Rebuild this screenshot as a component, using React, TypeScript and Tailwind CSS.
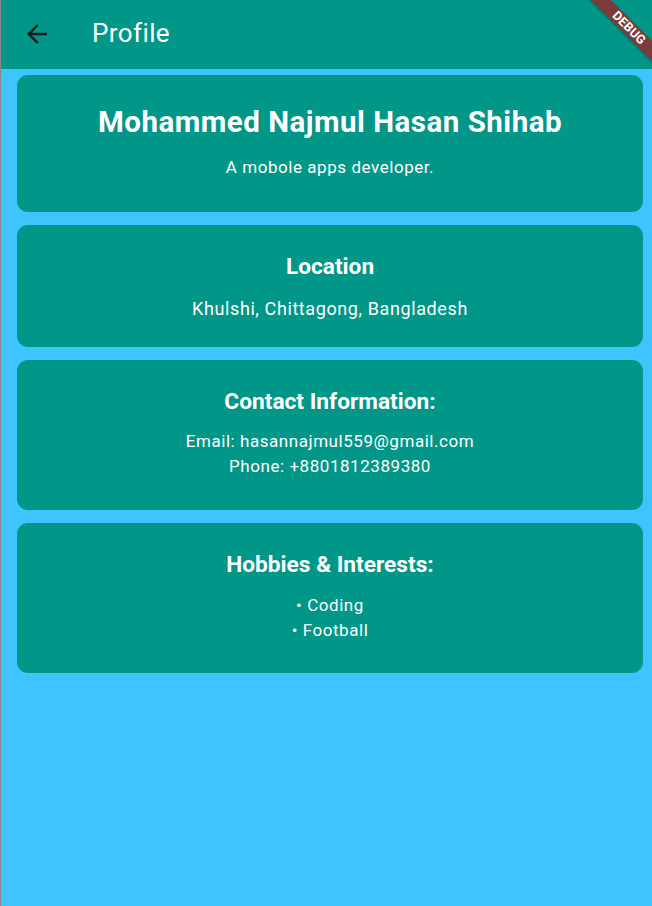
import { MdArrowBack } from "react-icons/md";

const font = { fontFamily: "Roboto, 'Noto Sans', sans-serif" };

export default function App() {
  return (
    <div
      className="relative min-h-[906px] overflow-hidden border-l border-[#8a8a8a] bg-[#40c4ff] text-white"
      style={font}
    >
      <header className="relative flex h-[69px] items-center overflow-hidden bg-[#009688]">
        <MdArrowBack className="ml-[21px] -translate-y-px text-[#1d1b20]" size={30} />
        <h1 className="ml-[40px] -translate-y-[2px] text-[26px] leading-none tracking-[0.4px]">Profile</h1>
        <div className="absolute top-[21px] left-[557px] flex h-[14px] w-[142px] rotate-45 items-center justify-center bg-[#7a3b39] shadow-[0_1px_3px_rgba(0,0,0,0.3)]">
          <span className="text-[12.5px] leading-none font-bold tracking-[0.2px]">DEBUG</span>
        </div>
      </header>

      <main className="mr-[9px] ml-[16px] flex flex-col gap-[13px] pt-[6px]">
        <section className="rounded-[11px] bg-[#009688] pt-[31px] pb-[32px] text-center">
          <h2 className="text-[29.5px] leading-[32px] font-bold tracking-[0.5px]">
            Mohammed Najmul Hasan Shihab
          </h2>
          <p className="mt-[17px] text-[17px] leading-[25px] tracking-[0.55px]">A mobole apps developer.</p>
        </section>

        <section className="rounded-[11px] bg-[#009688] pt-[30px] pb-[26px] text-center">
          <h3 className="text-[22.7px] leading-[24px] font-bold">Location</h3>
          <p className="mt-[17px] text-[18px] leading-[25px] tracking-[0.6px]">
            Khulshi, Chittagong, Bangladesh
          </p>
        </section>

        <section className="rounded-[11px] bg-[#009688] pt-[30px] pb-[31px] text-center">
          <h3 className="text-[22.7px] leading-[24px] font-bold">Contact Information:</h3>
          <div className="mt-[15px] text-[17px] leading-[25px] tracking-[0.55px]">
            <p>Email: hasannajmul559@gmail.com</p>
            <p>Phone: +8801812389380</p>
          </div>
        </section>

        <section className="rounded-[11px] bg-[#009688] pt-[30px] pb-[30px] text-center">
          <h3 className="text-[22.7px] leading-[24px] font-bold">Hobbies &amp; Interests:</h3>
          <div className="mt-[16px] text-[17px] leading-[25px] tracking-[0.55px]">
            <p>• Coding</p>
            <p>• Football</p>
          </div>
        </section>
      </main>
    </div>
  );
}
